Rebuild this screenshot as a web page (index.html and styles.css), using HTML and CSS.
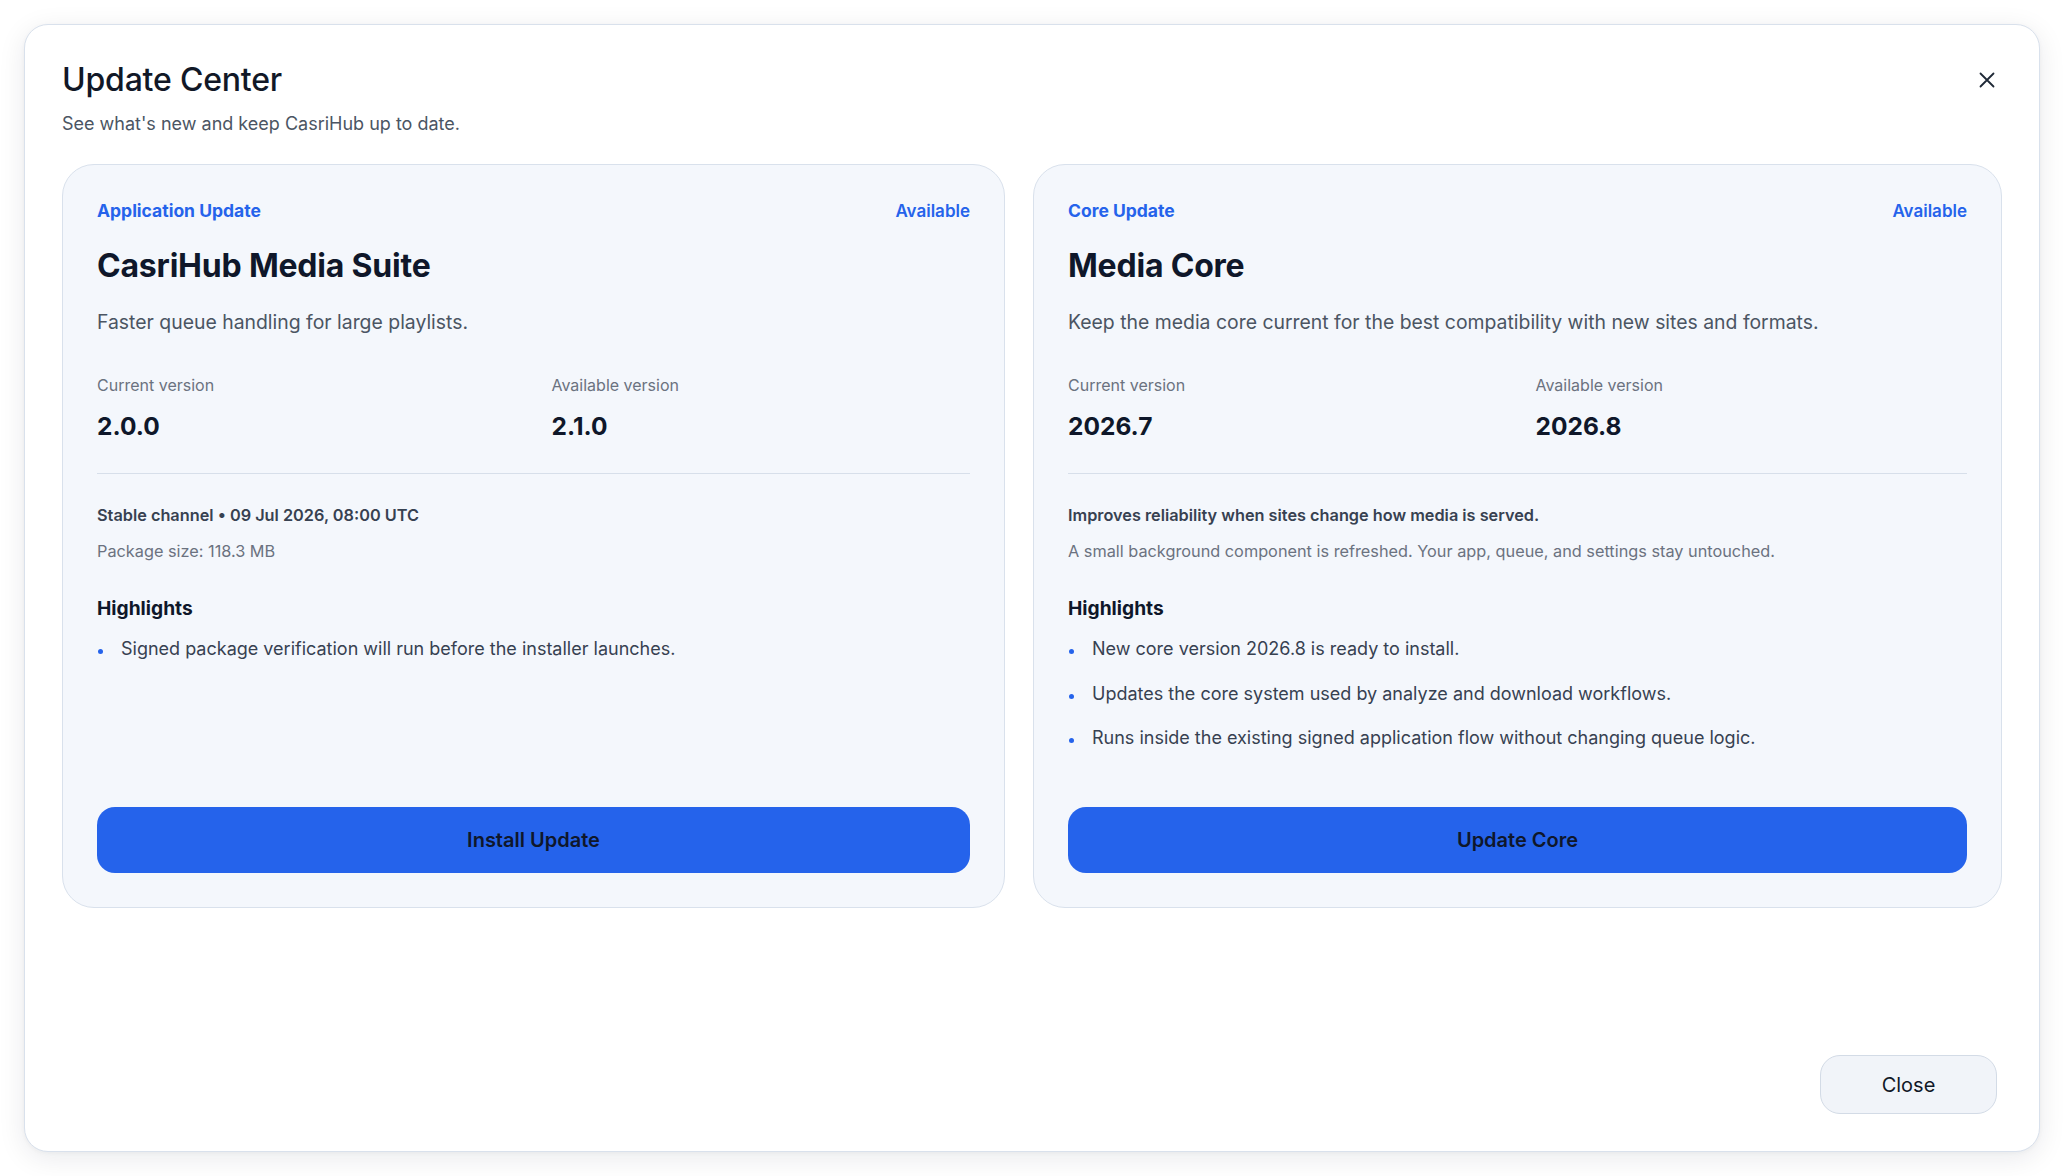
FILE: index.html
```html
<!DOCTYPE html>
<html lang="en">
<head>
<meta charset="utf-8">
<title>Update Center</title>
<link rel="stylesheet" href="styles.css">
</head>
<body>
<div class="dialog" role="dialog" aria-labelledby="dlg-title">
  <header class="dialog-header">
    <div class="dialog-heading">
      <h1 id="dlg-title" class="dialog-title">Update Center</h1>
      <p class="dialog-subtitle">See what's new and keep CasriHub up to date.</p>
    </div>
    <button class="icon-btn" aria-label="Close">
      <svg width="16" height="16" viewBox="0 0 16 16" aria-hidden="true">
        <path d="M1.5 1.5 L14.5 14.5 M14.5 1.5 L1.5 14.5" stroke="currentColor" stroke-width="1.8" stroke-linecap="round" fill="none"/>
      </svg>
    </button>
  </header>

  <div class="cards">
    <section class="card">
      <div class="card-body">
        <div class="card-top">
          <span class="eyebrow">Application Update</span>
          <span class="status">Available</span>
        </div>
        <h2 class="card-title">CasriHub Media Suite</h2>
        <p class="card-desc">Faster queue handling for large playlists.</p>
        <div class="versions">
          <div class="version">
            <span class="version-label">Current version</span>
            <span class="version-value">2.0.0</span>
          </div>
          <div class="version">
            <span class="version-label">Available version</span>
            <span class="version-value">2.1.0</span>
          </div>
        </div>
        <div class="meta">
          <p class="meta-main">Stable channel • 09 Jul 2026, 08:00 UTC</p>
          <p class="meta-sub">Package size: 118.3 MB</p>
        </div>
        <h3 class="highlights-title">Highlights</h3>
        <ul class="highlights">
          <li>Signed package verification will run before the installer launches.</li>
        </ul>
      </div>
      <button class="primary-btn">Install Update</button>
    </section>

    <section class="card">
      <div class="card-body">
        <div class="card-top">
          <span class="eyebrow">Core Update</span>
          <span class="status">Available</span>
        </div>
        <h2 class="card-title">Media Core</h2>
        <p class="card-desc">Keep the media core current for the best compatibility with new sites and formats.</p>
        <div class="versions">
          <div class="version">
            <span class="version-label">Current version</span>
            <span class="version-value">2026.7</span>
          </div>
          <div class="version">
            <span class="version-label">Available version</span>
            <span class="version-value">2026.8</span>
          </div>
        </div>
        <div class="meta">
          <p class="meta-main">Improves reliability when sites change how media is served.</p>
          <p class="meta-sub">A small background component is refreshed. Your app, queue, and settings stay untouched.</p>
        </div>
        <h3 class="highlights-title">Highlights</h3>
        <ul class="highlights">
          <li>New core version 2026.8 is ready to install.</li>
          <li>Updates the core system used by analyze and download workflows.</li>
          <li>Runs inside the existing signed application flow without changing queue logic.</li>
        </ul>
      </div>
      <button class="primary-btn">Update Core</button>
    </section>
  </div>

  <footer class="dialog-footer">
    <button class="secondary-btn">Close</button>
  </footer>
</div>
</body>
</html>
```

FILE: styles.css
```css
* {
  box-sizing: border-box;
}

html, body {
  height: 100%;
}

body {
  margin: 0;
  padding: 24px;
  background: #ffffff;
  font-family: Inter, "Noto Sans", "Liberation Sans", sans-serif;
  color: #111827;
}

p, h1, h2, h3, ul {
  margin: 0;
}

button {
  font-family: inherit;
  cursor: pointer;
}

/* Dialog shell */
.dialog {
  height: 100%;
  display: flex;
  flex-direction: column;
  background: #ffffff;
  border: 1px solid #d9e1ec;
  border-radius: 24px;
  box-shadow: 0 6px 28px rgba(15, 23, 42, 0.09), 0 1px 4px rgba(15, 23, 42, 0.04);
  padding: 36px 37px 37px 37px;
}

.dialog-header {
  display: flex;
  justify-content: space-between;
  align-items: flex-start;
}

.dialog-title {
  font-size: 32px;
  line-height: 38px;
  font-weight: 500;
  color: #111827;
  letter-spacing: -0.2px;
}

.dialog-subtitle {
  margin-top: 12px;
  font-size: 18px;
  line-height: 26px;
  color: #4b5563;
}

.icon-btn {
  width: 30px;
  height: 30px;
  margin-top: 4px;
  padding: 0;
  border: 0;
  background: transparent;
  color: #1f2937;
  display: flex;
  align-items: center;
  justify-content: center;
}

/* Update cards */
.cards {
  margin-top: 27px;
  display: grid;
  grid-template-columns: 943fr 969fr;
  gap: 28px;
}

.card {
  display: flex;
  flex-direction: column;
  background: #f4f7fc;
  border: 1px solid #d9e1ec;
  border-radius: 32px;
  padding: 34px;
}

.card-body {
  flex: 1;
  padding-bottom: 54px;
}

.card-top {
  display: flex;
  justify-content: space-between;
  align-items: baseline;
  line-height: 24px;
  color: #2563eb;
}

.eyebrow {
  font-size: 17.5px;
  font-weight: 700;
}

.status {
  font-size: 17px;
  font-weight: 600;
}

.card-title {
  margin-top: 25px;
  font-size: 32px;
  line-height: 36px;
  font-weight: 700;
  color: #0f172a;
  letter-spacing: -0.2px;
}

.card-desc {
  margin-top: 24px;
  font-size: 19.4px;
  line-height: 28px;
  color: #4b5563;
}

.versions {
  margin-top: 38px;
  display: grid;
  grid-template-columns: 1fr 1fr;
  column-gap: 36px;
  padding-bottom: 31px;
  border-bottom: 1px solid #d7dfea;
}

.version {
  display: flex;
  flex-direction: column;
  gap: 14px;
}

.version-label {
  font-size: 16px;
  line-height: 22px;
  color: #6b7280;
}

.version-value {
  font-size: 24.5px;
  line-height: 32px;
  font-weight: 700;
  color: #0f172a;
}

.meta {
  margin-top: 30px;
  display: flex;
  flex-direction: column;
  gap: 14px;
}

.meta-main {
  font-size: 16.3px;
  line-height: 22px;
  font-weight: 600;
  color: #374151;
}

.meta-sub {
  font-size: 16.3px;
  line-height: 22px;
  color: #6b7280;
}

.highlights-title {
  margin-top: 32px;
  font-size: 19.2px;
  line-height: 28px;
  font-weight: 700;
  color: #0f172a;
}

.highlights {
  margin-top: 12px;
  padding: 0;
  list-style: none;
  display: flex;
  flex-direction: column;
  gap: 14.7px;
}

.highlights li {
  display: flex;
  align-items: flex-start;
  font-size: 18px;
  line-height: 30px;
  color: #374151;
}

.highlights li::before {
  content: "";
  flex: none;
  width: 5px;
  height: 5px;
  margin: 15px 18px 0 1px;
  border-radius: 50%;
  background: #2563eb;
}

.primary-btn {
  height: 66px;
  border: 0;
  border-radius: 18px;
  background: #2563eb;
  color: #0f172a;
  font-size: 20px;
  font-weight: 600;
}

/* Footer */
.dialog-footer {
  margin-top: auto;
  display: flex;
  justify-content: flex-end;
  padding-right: 5px;
}

.secondary-btn {
  width: 177px;
  height: 59px;
  border: 1px solid #d3dbe6;
  border-radius: 20px;
  background: #f1f4f9;
  color: #111827;
  font-size: 20px;
  font-weight: 400;
}
```
